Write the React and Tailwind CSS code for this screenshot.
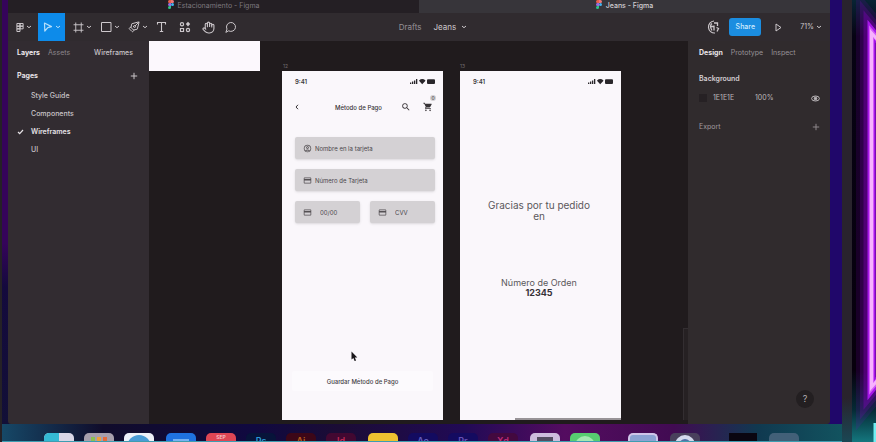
import React from "react";
import { LuHand, LuMessageCircle, LuPenTool, LuFrame } from "react-icons/lu";
import { MdShoppingCart, MdSearch, MdOutlineAccountCircle, MdOutlineCreditCard } from "react-icons/md";

function FigmaLogo() {
  return (
    <svg viewBox="0 0 6 9" className="h-[9px] w-[6px] shrink-0" aria-hidden="true">
      <path d="M3 0H1.5a1.5 1.5 0 0 0 0 3H3z" fill="#e8604a" />
      <path d="M3 0h1.5a1.5 1.5 0 0 1 0 3H3z" fill="#f0787a" />
      <path d="M3 3H1.5a1.5 1.5 0 0 0 0 3H3z" fill="#9a6ae0" />
      <circle cx="4.5" cy="4.5" r="1.5" fill="#3fb5f0" />
      <path d="M3 6H1.5A1.5 1.5 0 1 0 3 7.500z" fill="#2dc58a" />
    </svg>
  );
}

function Chevron() {
  return (
    <svg viewBox="0 0 6 4" className="h-[4px] w-[6px] shrink-0" fill="none" stroke="currentColor" strokeWidth="1" aria-hidden="true">
      <path d="M1 1l2 1.700L5 1" />
    </svg>
  );
}

function Plus() {
  return (
    <svg viewBox="0 0 8 8" className="size-2" stroke="currentColor" strokeWidth="1" aria-hidden="true">
      <path d="M4 .8v6.400M.8 4h6.400" />
    </svg>
  );
}

function Tool({ label, children, chevron, className = "" }) {
  return (
    <button aria-label={label} className={"flex h-7 shrink-0 items-center gap-[2px] " + className}>
      {children}
      {chevron && <Chevron />}
    </button>
  );
}

function TitleTabs() {
  return (
    <div className="flex h-[13px] shrink-0 bg-[#241f24] text-[7px] leading-[11px]">
      <button className="flex w-1/2 items-start justify-center gap-1 text-[#7d787e]">
        <FigmaLogo />
        Estacionamiento - Figma
      </button>
      <button className="flex w-1/2 items-start justify-center gap-1 bg-[#37353a] font-medium text-[#d2ced3]">
        <FigmaLogo />
        Jeans - Figma
      </button>
    </div>
  );
}

function Toolbar() {
  return (
    <header className="grid h-7 shrink-0 grid-cols-[1fr_auto_1fr] items-center bg-[#302b2f] text-[#cdc8cc]">
      <div className="flex items-center">
        <Tool label="Menu" chevron className="w-[30px] pl-2">
          <svg viewBox="0 0 9 11" className="h-[11px] w-[8px]" fill="none" stroke="currentColor" strokeWidth="1.100" aria-hidden="true">
            <path d="M1 1h3.500v3H1zM4.500 1H8v3H4.500zM1 4h3.500v3H1zM4.500 4H8v3H4.500zM1 7h3.500v3H1z" />
          </svg>
        </Tool>
        <Tool label="Move" chevron className="w-[27px] justify-center bg-[#0d8bea] text-[#b5defa]">
          <svg viewBox="0 0 10 10" className="size-[10px]" fill="none" stroke="currentColor" strokeWidth="1.200" strokeLinejoin="round" aria-hidden="true">
            <path d="M1.500 1l7 3.600-3.700 1L1.800 9z" />
          </svg>
        </Tool>
        <Tool label="Frame" chevron className="w-7 pl-2">
          <LuFrame className="size-[11px]" />
        </Tool>
        <Tool label="Rectangle" chevron className="w-7 pl-[7px]">
          <svg viewBox="0 0 12 12" className="size-3" fill="none" stroke="currentColor" strokeWidth="1" aria-hidden="true">
            <path d="M1.500 1.500h9.500v9H1.500z" />
          </svg>
        </Tool>
        <Tool label="Pen" chevron className="w-7 pl-[7px]">
          <LuPenTool className="size-3 -scale-x-100" />
        </Tool>
        <Tool label="Text" className="w-6 justify-center">
          <svg viewBox="0 0 11 12" className="h-3 w-[11px]" fill="none" stroke="currentColor" strokeWidth="1.100" aria-hidden="true">
            <path d="M1.500 3.500V1.500h8v2M5.500 1.500v9M3.800 10.500h3.400" />
          </svg>
        </Tool>
        <Tool label="Resources" className="w-6 justify-center">
          <svg viewBox="0 0 12 12" className="size-3" fill="none" stroke="currentColor" strokeWidth="1.200" aria-hidden="true">
            <circle cx="3" cy="3.200" r="1.600" />
            <path d="M9 .8l2.200 2.300L9 5.400 6.800 3.100z" fill="currentColor" stroke="none" />
            <path d="M1.500 7.500h3v3h-3z" />
            <circle cx="9" cy="9" r="1.600" />
          </svg>
        </Tool>
        <Tool label="Hand" className="w-[23px] justify-center">
          <LuHand className="size-[13px]" />
        </Tool>
        <Tool label="Comment" className="w-[22px] justify-center">
          <LuMessageCircle className="size-3" />
        </Tool>
      </div>
      <div className="flex items-center gap-3 pl-[28px] text-[8px]">
        <span className="text-[#979197]">Drafts</span>
        <button className="flex items-center gap-[5px]">
          Jeans
          <Chevron />
        </button>
      </div>
      <div className="flex items-center justify-end pr-2 text-[7px]">
        <svg viewBox="0 0 14 14" className="mr-[8px] size-[14px]" fill="none" stroke="currentColor" aria-label="Account" role="img">
          <path d="M7 1a6 6 0 1 0 1 12" strokeWidth="1.200" />
          <path d="M5 3.500C3 5 3.500 8 5 10.500M7 3h3.500v3M7 5.500v5M9.500 7.500l2 1-1.500 3M4 6.500h3" strokeWidth="1.300" />
        </svg>
        <button className="h-[18px] w-8 rounded-[3px] bg-[#1b8de0] font-medium text-[#d2ecff]">Share</button>
        <button aria-label="Present" className="mx-[14px]">
          <svg viewBox="0 0 7 9" className="h-[9px] w-[7px]" fill="none" stroke="currentColor" strokeLinejoin="round" aria-hidden="true">
            <path d="M1 1l5 3.500L1 8z" />
          </svg>
        </button>
        <button className="ml-1 flex items-center gap-[2px]">
          71%
          <Chevron />
        </button>
      </div>
    </header>
  );
}

const pages = ["Style Guide", "Components", "Wireframes", "UI"];

function LayersPanel() {
  return (
    <aside className="w-[141px] shrink-0 bg-[#322c31] pl-[9px] text-[7px] text-[#c9c4c8]">
      <div className="flex h-6 items-center pr-4">
        <button className="font-bold text-[#eeeaee]">Layers</button>
        <button className="ml-2 text-[#8c868b]">Assets</button>
        <button className="ml-auto font-medium">Wireframes</button>
      </div>
      <div className="flex h-[22px] items-center justify-between pr-[11px]">
        <h2 className="font-bold text-[#e6e2e6]">Pages</h2>
        <button aria-label="Add page">
          <Plus />
        </button>
      </div>
      <ul>
        {pages.map((name) => (
          <li key={name}>
            <button className={"flex h-[18px] w-full items-center " + (name === "Wireframes" ? "font-semibold text-[#e6e2e6]" : "font-medium")}>
              <span className="w-[14px]">
                {name === "Wireframes" && (
                  <svg viewBox="0 0 7 6" className="h-[6px] w-[7px]" fill="none" stroke="currentColor" strokeWidth="1.200" aria-hidden="true">
                    <path d="M1 3l1.700 1.700L6 1" />
                  </svg>
                )}
              </span>
              {name}
            </button>
          </li>
        ))}
      </ul>
    </aside>
  );
}

function DesignPanel() {
  return (
    <aside className="flex w-[142px] shrink-0 flex-col bg-[#302b2d] pl-[11px] pr-[10px] text-[7px] text-[#bcb7ba]">
      <div className="flex h-6 items-center gap-2">
        <button className="font-bold text-[#e8e4e7]">Design</button>
        <button className="text-[#989296]">Prototype</button>
        <button className="text-[#989296]">Inspect</button>
      </div>
      <h2 className="mt-1 flex h-5 items-center font-semibold text-[#d5d0d4]">Background</h2>
      <div className="flex h-[18px] items-center">
        <span className="size-2 bg-[#262124]" />
        <span className="ml-[6px] w-[42px]">1E1E1E</span>
        <span>100%</span>
        <button aria-label="Toggle visibility" className="ml-auto">
          <svg viewBox="0 0 9 7" className="h-[7px] w-[9px]" fill="none" stroke="currentColor" aria-hidden="true">
            <ellipse cx="4.500" cy="3.500" rx="3.900" ry="2.500" />
            <circle cx="4.500" cy="3.500" r="1.300" fill="currentColor" />
          </svg>
        </button>
      </div>
      <div className="mt-3 flex h-4 items-center justify-between">
        <h2 className="text-[#a19b9f]">Export</h2>
        <button aria-label="Add export" className="text-[#8c868a]">
          <Plus />
        </button>
      </div>
      <button className="mb-4 mr-[6px] mt-auto size-[18px] self-end rounded-full bg-[#231f21] text-[9px] text-[#b4afb2]">?</button>
    </aside>
  );
}

function StatusBar() {
  return (
    <div className="flex h-5 items-center justify-between pl-[13px] pr-[7px]">
      <span className="text-[6px] font-semibold text-[#3a373a]">9:41</span>
      <svg viewBox="0 0 27 7" className="h-[7px] w-[27px] text-[#29262a]" fill="currentColor" aria-hidden="true">
        <path d="M1 4.500h1.300V6H1zM3 3.500h1.300V6H3zM5 2.500h1.300V6H5zM7 1h1.300v5H7z" />
        <path d="M10 2.800a5.500 5.500 0 0 1 6.500 0L13.200 6.200zM10 2.500a4.800 4.800 0 0 1 6.500 0" />
        <rect x="18" y="1.300" width="8" height="4.600" rx="1" />
      </svg>
    </div>
  );
}

function Field({ label, icon: Icon, half }) {
  return (
    <label className={"flex h-[22px] items-center rounded-[2px] bg-[#d4d1d4] pl-2 shadow-sm " + (half ? "min-w-0 flex-1" : "w-full")}>
      <Icon className="size-[9px] shrink-0 text-[#555154]" />
      <input
        aria-label={label}
        placeholder={label}
        className={"w-full min-w-0 bg-transparent text-[6px] outline-none placeholder:text-[#4a464a] " + (half ? "pl-2" : "pl-[3px]")}
      />
    </label>
  );
}

function PaymentFrame() {
  return (
    <section className="absolute left-[133px] top-[30px] flex h-[349px] w-[161px] flex-col bg-[#faf7fb]">
      <StatusBar />
      <div className="flex h-8 items-center pl-[13px] pr-[10px] text-[#373337]">
        <button aria-label="Back">
          <svg viewBox="0 0 4 6" className="h-[6px] w-[4px]" fill="none" stroke="currentColor" aria-hidden="true">
            <path d="M3 .8L1 3l2 2.200" />
          </svg>
        </button>
        <h3 className="flex-1 pl-[17px] text-center text-[6px] font-medium">Método de Pago</h3>
        <button aria-label="Search">
          <MdSearch className="size-[10px]" />
        </button>
        <button aria-label="Cart" className="relative ml-3">
          <MdShoppingCart className="size-[10px]" />
          <span className="absolute -right-[3px] -top-[7px] size-[6px] rounded-full bg-[#d2cfd2] text-center text-[5px] leading-[6px]">0</span>
        </button>
      </div>
      <form className="mt-[14px] flex flex-col gap-[10px] pl-[13px] pr-2">
        <Field label="Nombre en la tarjeta" icon={MdOutlineAccountCircle} />
        <Field label="Número de Tarjeta" icon={MdOutlineCreditCard} />
        <div className="flex gap-[10px]">
          <Field label="00/00" icon={MdOutlineCreditCard} half />
          <Field label="CVV" icon={MdOutlineCreditCard} half />
        </div>
      </form>
      <button className="mx-[10px] mb-[29px] mt-auto h-5 rounded-[2px] bg-[#fcfafd] text-[6px] font-medium text-[#454145]">
        Guardar Método de Pago
      </button>
    </section>
  );
}

function ThanksFrame() {
  return (
    <section className="absolute left-[311px] top-[30px] h-[349px] w-[161px] bg-[#faf7fb] text-center text-[#5b575c]">
      <StatusBar />
      <div className="pr-[3px]">
        <p className="mx-auto mt-[109px] w-[112px] text-[10px] leading-[11px]">Gracias por tu pedido en</p>
        <p className="mt-[56px] text-[9px] leading-[10px]">Número de Orden</p>
        <p className="text-[9px] font-bold leading-[10px] text-[#363238]">12345</p>
      </div>
    </section>
  );
}

function Canvas() {
  return (
    <main className="relative min-w-0 flex-1 overflow-hidden bg-[#201b1d]">
      <div className="absolute left-0 top-0 h-[30px] w-[111px] bg-[#fcf8fd]" />
      <span className="absolute left-[134px] top-[22px] text-[5px] leading-[6px] text-[#716b70]">12</span>
      <span className="absolute left-[311px] top-[22px] text-[5px] leading-[6px] text-[#716b70]">13</span>
      <PaymentFrame />
      <ThanksFrame />
      <svg viewBox="0 0 7 11" className="absolute left-[202px] top-[310px] h-[11px] w-[7px]" aria-hidden="true">
        <path d="M.5.5v8l1.900-1.600L3.600 10l1.500-.6-1.300-2.900h2.500z" fill="#19161a" />
      </svg>
      <div className="absolute bottom-[4px] left-[366px] h-[2px] w-[106px] bg-[#6d686c]/70" />
      <div className="absolute bottom-[4px] right-0 top-[287px] w-[5px] border-l border-t border-[#332e31] bg-[#262123]" />
    </main>
  );
}

function Dock() {
  const tile = "h-2 w-[30px] shrink-0 overflow-hidden rounded-t-[5px] ";
  const app = tile + "text-center text-[9px] font-semibold leading-[16px] ";
  return (
    <nav aria-label="Dock" className="flex h-2 shrink-0 gap-[10px] overflow-hidden pl-[42px]">
      <div className={tile + "flex bg-[#d9d6e6]"}>
        <span className="w-1/2 bg-[#35b9d4]" />
      </div>
      <div className={tile + "flex items-end justify-center gap-[2px] bg-[#a79fac]"}>
        <span className="size-1 bg-[#8cc152]" />
        <span className="size-1 bg-[#f0a13a]" />
        <span className="size-1 bg-[#e86a3c]" />
      </div>
      <div className={tile + "bg-[#edf0f8]"}>
        <span className="mx-auto mt-[2px] block size-6 rounded-full bg-[#4a9bd5]" />
      </div>
      <div className={tile + "ml-[2px] bg-[#1f72e0] pt-[6px]"}>
        <span className="mx-auto block h-1 w-4 bg-[#77b2f2]" />
      </div>
      <div className={tile + "bg-[#df4654] text-center text-[5px] font-semibold leading-[9px] text-[#f7c5cb]"}>SEP</div>
      <div className={app + "bg-[#07143a] text-[#2b9ad9]"}>Ps</div>
      <div className={app + "bg-[#3d0718] text-[#b9601b]"}>Ai</div>
      <div className={app + "bg-[#420831] text-[#c02855]"}>Id</div>
      <div className={tile + "ml-[2px] bg-[#efc130]"} />
      <div className={app + "bg-[#130b60] text-[#625dbd]"}>Ae</div>
      <div className={app + "bg-[#140b60] text-[#6650b5]"}>Pr</div>
      <div className={app + "bg-[#43093f] text-[#bc2c77]"}>Xd</div>
      <div className={tile + "ml-[2px] bg-[#cdbddd] pt-1"}>
        <span className="mx-auto block h-1 w-4 bg-[#544d61]" />
      </div>
      <div className={tile + "bg-[#57cd70] pt-[3px]"}>
        <span className="mx-auto block size-5 rounded-full bg-[#a4e9b0]" />
      </div>
      <div className={tile + "ml-[18px] border-2 border-b-0 border-[#cfc5e9] bg-[#8ba2d2]"} />
      <div className={tile + "ml-[2px] bg-[#49405c] pt-[2px]"}>
        <span className="mx-auto block size-5 rounded-full border-4 border-[#d4d9ec] bg-[#5370a5]" />
      </div>
      <div className="ml-[19px] h-2 w-7 shrink-0 bg-[#0a0611]" />
      <div className={tile + "ml-[2px] bg-[#426078]"} />
    </nav>
  );
}

function NeonWall() {
  return (
    <div className="w-6 shrink-0 overflow-hidden bg-[linear-gradient(to_bottom,#082434_0,#060313_36px,#07000d_370px,#052a35_410px,#14777e_100%)]">
      <svg viewBox="0 0 24 442" preserveAspectRatio="none" className="h-full w-full" fill="none" aria-hidden="true">
        <g stroke="#8a00c8">
          <path d="M34 49L19 31v358l15-18" strokeWidth="30" strokeOpacity=".14" />
          <path d="M34 49L19 31v358l15-18" strokeWidth="22" strokeOpacity=".2" />
          <path d="M34 49L19 31v358l15-18" strokeWidth="15" strokeOpacity=".35" />
        </g>
        <path d="M34 49L19.500 31v358L34 371" stroke="#a616e8" strokeWidth="8" />
        <path d="M34 49L19.500 32v356L34 371" stroke="#d35cf8" strokeWidth="5" />
        <path d="M34 49L19.500 33v354L34 371" stroke="#f7b2ff" strokeWidth="3" />
        <path d="M23 423v19" stroke="#73eef2" strokeWidth="3" />
      </svg>
    </div>
  );
}

export default function App() {
  return (
    <div className="flex h-screen w-full overflow-hidden bg-[#0b0613] font-['Inter',sans-serif]">
      <div className="flex min-w-0 flex-1 flex-col border-l-2 border-[#252126] bg-[linear-gradient(to_right,transparent_50%,#20076a_50%),linear-gradient(to_bottom,#35045a_0,#35045a_55%,#140a3d_65%,#121036_100%)]">
        <div className="ml-[6px] mr-3 flex min-h-0 flex-1 flex-col overflow-hidden rounded-b-[3px]">
          <TitleTabs />
          <Toolbar />
          <div className="flex min-h-0 flex-1">
            <LayersPanel />
            <Canvas />
            <DesignPanel />
          </div>
        </div>
        <div className="shrink-0 border-b border-[#3e9db1] bg-[linear-gradient(to_right,#164867_0,#100c2b_12%,#100940_30%,#1b0c35_40%,#210a55_55%,#540c60_67%,#410b52_80%,#103950_90%,#12535f_100%)] pt-[9px]">
          <Dock />
        </div>
      </div>
      <div className="w-[10px] shrink-0 bg-[linear-gradient(to_bottom,#29232d_90%,#1a4754_100%)]" />
      <NeonWall />
    </div>
  );
}
